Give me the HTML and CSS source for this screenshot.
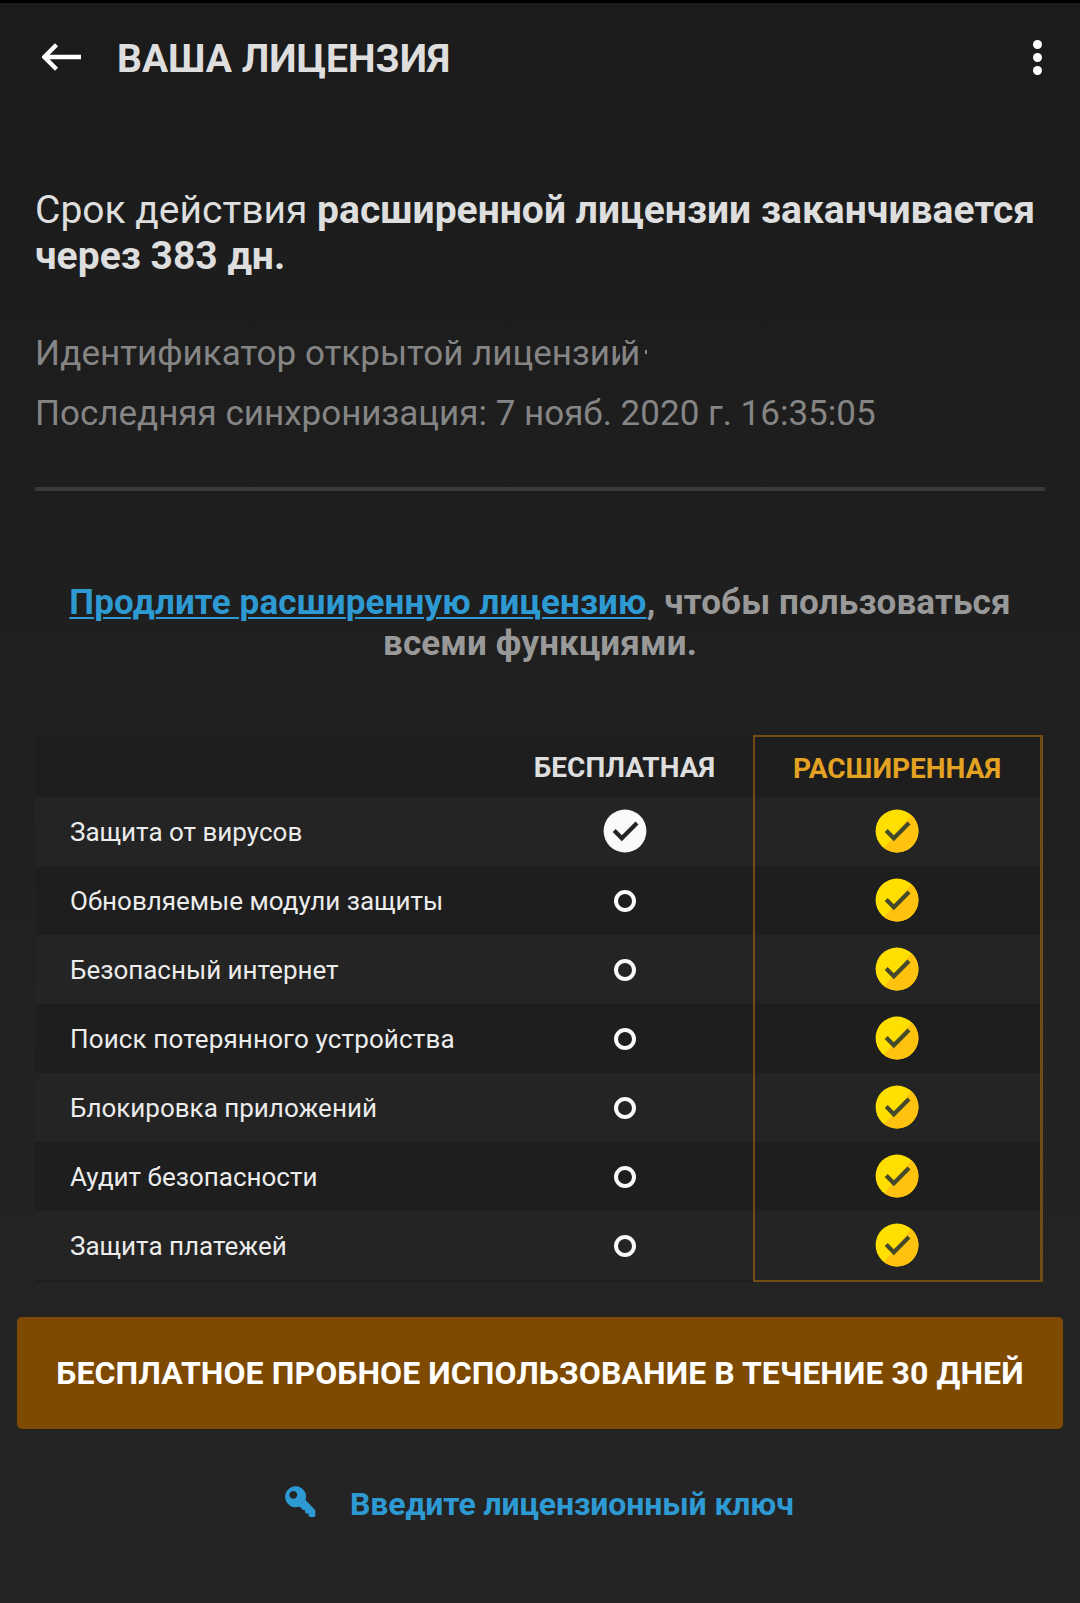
FILE: index.html
```html
<!DOCTYPE html>
<html lang="ru">
  <head>
    <meta charset="utf-8">
    <title>Ваша лицензия</title>
    <link rel="stylesheet" href="styles.css">
  </head>

  <body>
    <!-- icons used more than once -->
    <svg class="defs" width="0" height="0">
      <symbol id="check" viewBox="0 0 44 44">
        <path d="M11.2 21.5 L18.8 29.3 L34 14" fill="none" stroke="currentColor" stroke-width="4.2"/>
      </symbol>
      <symbol id="gold" viewBox="0 0 44 44">
        <circle cx="22" cy="22" r="21.4" fill="#ffdf00"/>
        <path d="M36.5 6.3 A21.4 21.4 0 0 1 9.2 39.2 Z" fill="#ffc20e"/>
        <use href="#check"/>
      </symbol>
    </svg>

    <header class="topbar">
      <svg class="back" width="40" height="28" viewBox="0 0 40 28">
        <path d="M39 14 H3 M14.5 1.8 L2.3 14 L14.5 26.2" fill="none" stroke="#fff" stroke-width="4.4"/>
      </svg>
      <h1>ВАША ЛИЦЕНЗИЯ</h1>
      <div class="dots"><i></i><i></i><i></i></div>
    </header>

    <section class="status">
      <p class="expires">Срок действия <b>расширенной лицензии заканчивается<br>через 383 дн.</b></p>
      <p class="meta">Идентификатор открытой лицензи<span class="cut">и</span><span class="tail">й</span><i class="speck"></i></p>
      <p class="meta">Последняя синхронизация: <span>7 нояб. 2020 г. 16:35:05</span></p>
    </section>

    <p class="promo"><a>Продлите расширенную лицензию</a>, чтобы пользоваться<br>всеми функциями.</p>

    <div class="features">
      <div class="row head"><span></span><b>БЕСПЛАТНАЯ</b><b class="gold">РАСШИРЕННАЯ</b></div>
      <div class="row"><span>Защита от вирусов</span><svg class="free"><circle cx="22" cy="22" r="21.4" fill="#fafafa"/><use href="#check"/></svg><svg class="full"><use href="#gold"/></svg></div>
      <div class="row"><span>Обновляемые модули защиты</span><i class="ring"></i><svg class="full"><use href="#gold"/></svg></div>
      <div class="row"><span>Безопасный интернет</span><i class="ring"></i><svg class="full"><use href="#gold"/></svg></div>
      <div class="row"><span class="wide">Поиск потерянного устройства</span><i class="ring"></i><svg class="full"><use href="#gold"/></svg></div>
      <div class="row"><span>Блокировка приложений</span><i class="ring"></i><svg class="full"><use href="#gold"/></svg></div>
      <div class="row"><span>Аудит безопасности</span><i class="ring"></i><svg class="full"><use href="#gold"/></svg></div>
      <div class="row"><span>Защита платежей</span><i class="ring"></i><svg class="full"><use href="#gold"/></svg></div>
      <div class="frame"></div>
    </div>

    <div class="trial">БЕСПЛАТНОЕ ПРОБНОЕ ИСПОЛЬЗОВАНИЕ В ТЕЧЕНИЕ 30 ДНЕЙ</div>

    <div class="key">
      <svg width="32" height="32" viewBox="0 0 32 32" fill="#2e9ad3">
        <path fill-rule="evenodd" d="M11.6 .3 a10.5 10.5 0 1 0 .01 0 Z M9.3 4.9 a3.9 3.9 0 1 1 -.01 0 Z"/>
        <path d="M21.3 13.8 L31.3 24.2 V30 L30.3 31 H26 L24.4 29.6 V27.4 H22.2 L21 26.2 V24 H19 L15.4 20.2 L17.5 15 Z"/>
      </svg>
      <span>Введите лицензионный ключ</span>
    </div>
  </body>
</html>
```

FILE: styles.css
```css
* {
  box-sizing: border-box;
}

body {
  margin: 0;
  height: 1603px;
  overflow: hidden;
  border-top: 3px solid #000;
  background: linear-gradient(#1b1b1b, #1e1e1e 30%, #242424 85%);
  font-family: Roboto, sans-serif;
  color: #dedede;
}

p, h1 {
  margin: 0;
}

.defs {
  position: absolute;
}

.topbar {
  display: flex;
  align-items: center;
  height: 108px;
  padding: 0 38px 0 42px;
}

.back {
  margin-right: 35px;
}

h1 {
  padding-top: 4px;
  font-size: 39px;
  line-height: 46px;
  font-weight: 700;
}

.dots {
  display: flex;
  flex-direction: column;
  gap: 4px;
  margin-left: auto;
}

.dots i {
  width: 9px;
  height: 9px;
  border-radius: 50%;
  background: #fff;
}

.status {
  height: 380px;
  margin: 0 35px;
  padding-top: 76px;
  border-bottom: 4px solid #383a39;
}

.expires {
  margin-bottom: 45px;
  font-size: 39px;
  line-height: 46px;
  white-space: nowrap;
}

.expires b {
  letter-spacing: 0.02px;
}

.meta {
  font-size: 35px;
  line-height: 60px;
  color: #858585;
  white-space: nowrap;
}

.cut {
  display: inline-block;
  width: 10px;
  height: 60px;
  overflow: hidden;
  vertical-align: top;
}

.speck {
  display: inline-block;
  width: 2px;
  height: 4px;
  margin-left: 5px;
  background: #858585;
  vertical-align: 11px;
}

.promo {
  height: 244px;
  padding-top: 91px;
  font-size: 35px;
  line-height: 41px;
  font-weight: 700;
  letter-spacing: 0.14px;
  text-align: center;
  color: #999;
  white-space: nowrap;
}

.promo a {
  color: #2e9ad3;
  text-decoration: underline;
  text-decoration-thickness: 2px;
  text-underline-offset: 3px;
}

.features {
  position: relative;
  width: 1008px;
  height: 547px;
  margin-left: 35px;
  background: #1e1e1e;
}

.row {
  display: grid;
  grid-template-columns: 461px 257px 290px;
  align-items: center;
  justify-items: center;
  height: 69px;
  font-size: 26px;
  color: #ececec;
}

.row:nth-child(even) {
  background: #242424;
}

.row span {
  justify-self: start;
  padding-left: 35px;
  white-space: nowrap;
}

.row .wide {
  letter-spacing: 0.14px;
}

.head {
  height: 62px;
  padding-top: 2px;
  font-size: 28px;
  color: #dedede;
}

.gold {
  padding: 2px 2px 0 0;
  color: #e3a222;
}

.row svg {
  width: 44px;
  height: 44px;
  margin-bottom: 1px;
}

.free {
  color: #242424;
}

.row .full {
  margin-right: 2px;
  color: #45492b;
}

.ring {
  width: 22px;
  height: 22px;
  margin-left: 1px;
  border: 4px solid #fafafa;
  border-radius: 50%;
}

/* outline over the paid column */
.frame {
  position: absolute;
  top: 0;
  right: 0;
  width: 290px;
  height: 547px;
  border: 2px solid #734b15;
  border-right-width: 3px;
}

.trial {
  height: 112px;
  margin: 35px 17px 0;
  border-radius: 5px;
  background: #7e4900;
  color: #fff;
  font-size: 32px;
  line-height: 113px;
  font-weight: 700;
  letter-spacing: 0.08px;
  text-align: center;
  white-space: nowrap;
}

.key {
  display: flex;
  align-items: center;
  height: 150px;
  padding-left: 284px;
  color: #2e9ad3;
  font-size: 32px;
  font-weight: 700;
}

.key svg {
  margin-bottom: 5px;
}

.key span {
  margin-left: 34px;
  letter-spacing: -0.12px;
  white-space: nowrap;
}
```
